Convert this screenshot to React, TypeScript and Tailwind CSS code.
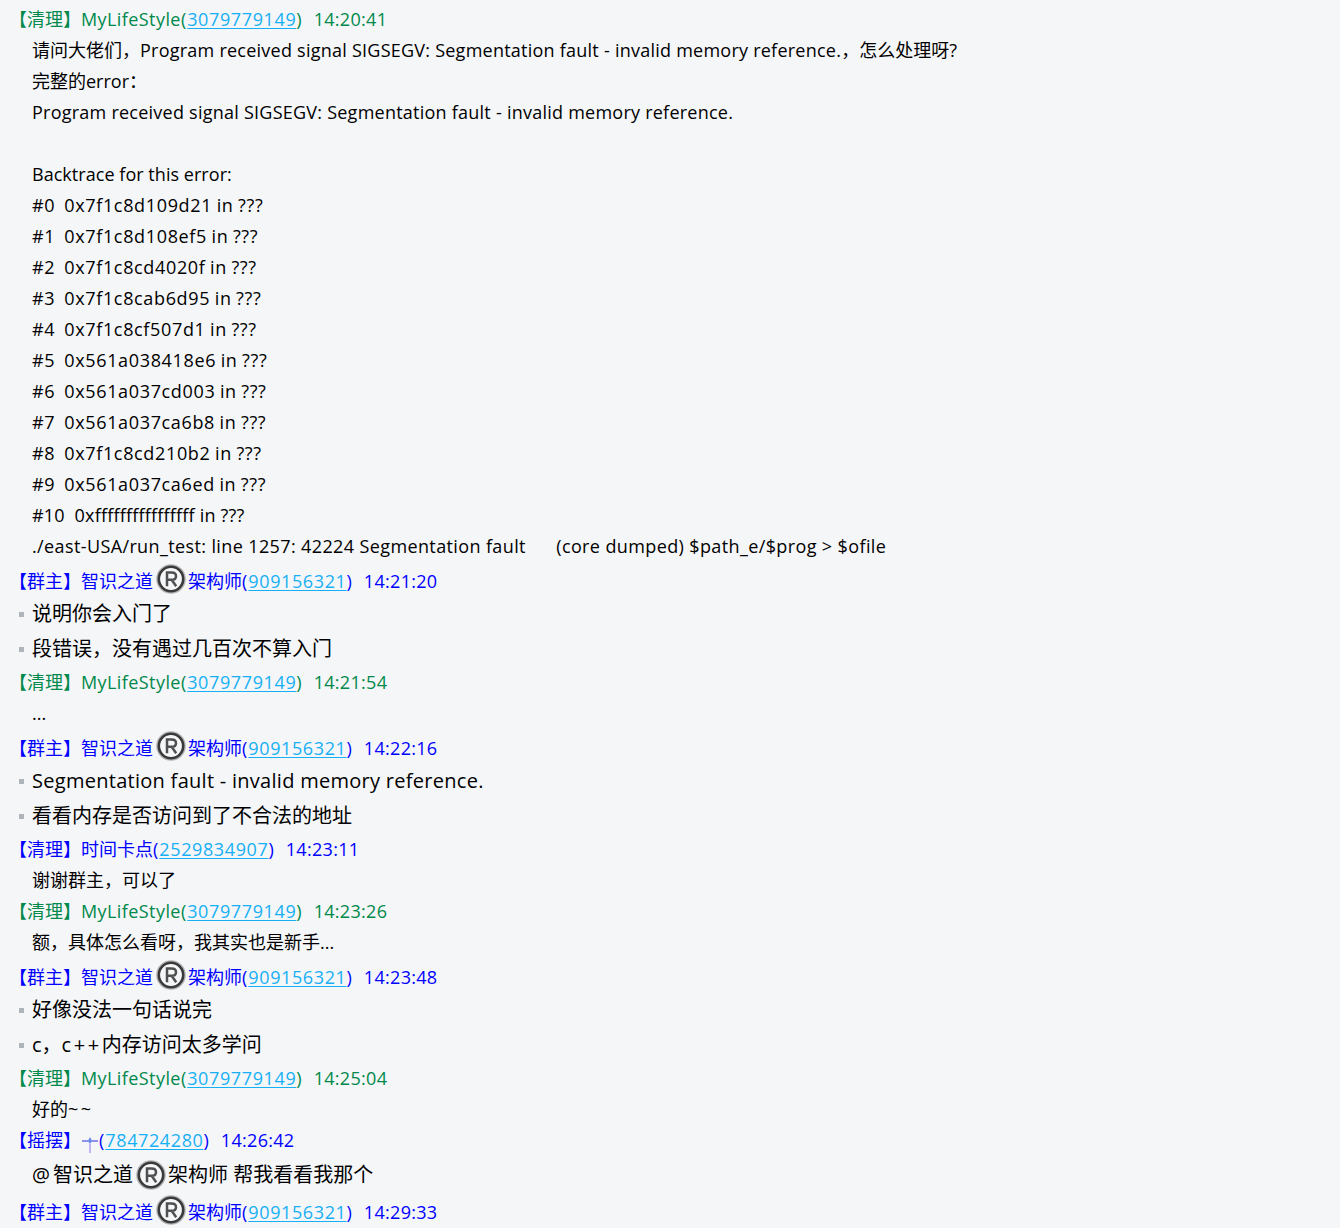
import type { ReactNode } from "react";

const font = `"Open Sans", "Noto Sans CJK SC", sans-serif`;

function Reg({ className = "" }: { className?: string }) {
  return (
    <svg viewBox="0 0 30 30" className={`inline-block w-[30px] h-[30px] shrink-0 blur-[0.6px] ${className}`}>
      <circle cx="15" cy="15" r="13" fill="none" stroke="#9a9a9a" strokeWidth="3.6" opacity="0.7" />
      <circle cx="15" cy="15" r="12.2" fill="none" stroke="#3a3a3a" strokeWidth="2.6" />
      <path d="M11 22.2V8.6h4.6c2.9 0 4.4 1.4 4.4 3.6 0 2.2-1.5 3.6-4.4 3.6H11M15.6 15.8l4.6 6.4" fill="none" stroke="#505050" strokeWidth="2.5" />
    </svg>
  );
}

function Header({ role, name, qq, time, color, tall = false }: { role: string; name: ReactNode; qq: string; time: string; color: string; tall?: boolean }) {
  return (
    <div className={`flex items-center pl-[9px] whitespace-pre text-[18px] ${tall ? "h-[35px] pt-[4px]" : "h-[31px]"}`} style={{ color }}>
      <span>【{role}】</span>
      {name}
      <span>(</span>
      <span className="ml-[1px] text-[#18b0f5] underline decoration-1 underline-offset-2 tracking-[0.62px]">{qq}</span>
      <span>)</span>
      <span className="ml-[12px] tracking-[0.3px]">{time}</span>
    </div>
  );
}

function Owner({ time }: { time: string }) {
  return (
    <Header
      tall
      role="群主"
      color="#0000ff"
      qq="909156321"
      time={time}
      name={
        <span className="flex items-center">
          智识之道
          <Reg className="ml-[3px] mb-[5px]" />
          <span className="ml-[2px]">架构师</span>
        </span>
      }
    />
  );
}

function Line({ children, track = "" }: { children?: ReactNode; track?: string }) {
  return <div className={`h-[31px] leading-[31px] pl-[32px] text-[18px] whitespace-pre text-black ${track}`}>{children}</div>;
}

function Bullet({ children }: { children: ReactNode }) {
  return (
    <div className="flex items-center h-[35px] pb-[1px] text-[20px] text-black whitespace-pre">
      <span className="w-[5px] h-[5px] bg-[#aeb4ba] blur-[0.3px] ml-[19px] mr-[8px]" />
      <span>{children}</span>
    </div>
  );
}

const green = "#00894b";

function Life({ time }: { time: string }) {
  return (
    <Header
      role="清理"
      name={<span className="tracking-[0.42px]">MyLifeStyle</span>}
      qq="3079779149"
      time={time}
      color={green}
    />
  );
}

const hexLines = [
  "#0  0x7f1c8d109d21 in ???",
  "#1  0x7f1c8d108ef5 in ???",
  "#2  0x7f1c8cd4020f in ???",
  "#3  0x7f1c8cab6d95 in ???",
  "#4  0x7f1c8cf507d1 in ???",
  "#5  0x561a038418e6 in ???",
  "#6  0x561a037cd003 in ???",
  "#7  0x561a037ca6b8 in ???",
  "#8  0x7f1c8cd210b2 in ???",
  "#9  0x561a037ca6ed in ???",
];

export default function App() {
  return (
    <div className="w-[1340px] h-[1228px] overflow-hidden bg-[#f5f6f8] pt-[4px]" style={{ fontFamily: font }}>
      <Life time="14:20:41" />
      <Line>
        请问大佬们，
        <span className="tracking-[0.24px]">Program received signal SIGSEGV: Segmentation fault - invalid memory reference.</span>
        ，怎么处理呀?
      </Line>
      <Line>完整的error：</Line>
      <Line track="tracking-[0.24px]">Program received signal SIGSEGV: Segmentation fault - invalid memory reference.</Line>
      <Line />
      <Line track="tracking-[0.04px]">Backtrace for this error:</Line>
      {hexLines.map((l) => (
        <Line key={l} track="tracking-[0.65px] [word-spacing:-0.8px]">{l}</Line>
      ))}
      <Line track="tracking-[0.2px]">#10  0xffffffffffffffff in ???</Line>
      <Line track="tracking-[0.38px]">./east-USA/run_test: line 1257: 42224 Segmentation fault      (core dumped) $path_e/$prog &gt; $ofile</Line>
      <Owner time="14:21:20" />
      <Bullet>说明你会入门了</Bullet>
      <Bullet>段错误，没有遇过几百次不算入门</Bullet>
      <Life time="14:21:54" />
      <Line>...</Line>
      <Owner time="14:22:16" />
      <Bullet>
        <span className="tracking-[0.28px]">Segmentation fault - invalid memory reference.</span>
      </Bullet>
      <Bullet>看看内存是否访问到了不合法的地址</Bullet>
      <Header role="清理" name="时间卡点" qq="2529834907" time="14:23:11" color="#0000ff" />
      <Line>谢谢群主，可以了</Line>
      <Life time="14:23:26" />
      <Line>额，具体怎么看呀，我其实也是新手...</Line>
      <Owner time="14:23:48" />
      <Bullet>好像没法一句话说完</Bullet>
      <Bullet>
        c，<span className="tracking-[2.6px]">c++</span>内存访问太多学问
      </Bullet>
      <Life time="14:25:04" />
      <Line>
        好的<span className="tracking-[2.5px]">~~</span>
      </Line>
      <Header
        role="摇摆"
        color="#0000ff"
        qq="784724280"
        time="14:26:42"
        name={
          <svg viewBox="0 0 18 20" className="w-[18px] h-[20px] mt-[5px]">
            <path d="M1 8h6M11 8h6" stroke="#2a2ae0" strokeWidth="1" fill="none" />
            <path d="M9 11v9" stroke="#b9a4f0" strokeWidth="1.6" fill="none" />
            <path d="M9 4 6.8 8 9 11l2.2-3z" fill="#6a8ae8" />
          </svg>
        }
      />
      <div className="flex items-center h-[37px] pl-[32px] text-[20px] text-black whitespace-pre">
        <span className="tracking-[3px]">@</span>智识之道
        <Reg className="ml-[3px]" />
        <span className="ml-[2px]">架构师 帮我看看我那个</span>
      </div>
      <Owner time="14:29:33" />
    </div>
  );
}
